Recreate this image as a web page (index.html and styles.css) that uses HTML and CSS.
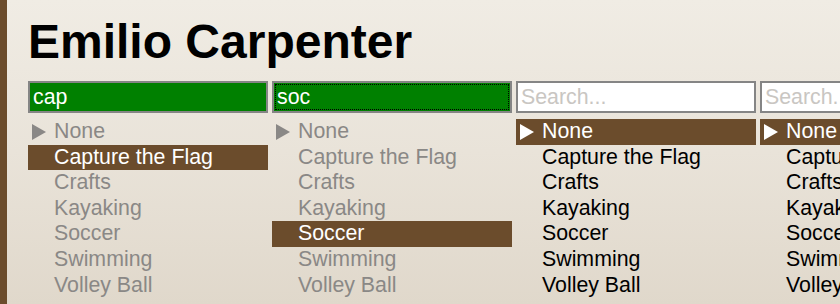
FILE: index.html
```html
<!DOCTYPE html>
<html>
<head>
<meta charset="utf-8">
<link rel="stylesheet" href="styles.css">
</head>
<body>
<div class="page">
  <h1 class="name">Emilio Carpenter</h1>
  <div class="columns">
    <div class="col">
      <input class="search filled" type="text" value="cap">
      <ul class="list">
        <li class="item dim"><span class="tri"></span>None</li>
        <li class="item sel">Capture the Flag</li>
        <li class="item dim">Crafts</li>
        <li class="item dim">Kayaking</li>
        <li class="item dim">Soccer</li>
        <li class="item dim">Swimming</li>
        <li class="item dim">Volley Ball</li>
      </ul>
    </div>
    <div class="col">
      <input class="search filled focus" type="text" value="soc">
      <ul class="list">
        <li class="item dim"><span class="tri"></span>None</li>
        <li class="item dim">Capture the Flag</li>
        <li class="item dim">Crafts</li>
        <li class="item dim">Kayaking</li>
        <li class="item sel">Soccer</li>
        <li class="item dim">Swimming</li>
        <li class="item dim">Volley Ball</li>
      </ul>
    </div>
    <div class="col">
      <input class="search" type="text" placeholder="Search...">
      <ul class="list">
        <li class="item sel"><span class="tri"></span>None</li>
        <li class="item">Capture the Flag</li>
        <li class="item">Crafts</li>
        <li class="item">Kayaking</li>
        <li class="item">Soccer</li>
        <li class="item">Swimming</li>
        <li class="item">Volley Ball</li>
      </ul>
    </div>
    <div class="col">
      <input class="search" type="text" placeholder="Search...">
      <ul class="list">
        <li class="item sel"><span class="tri"></span>None</li>
        <li class="item">Capture the Flag</li>
        <li class="item">Crafts</li>
        <li class="item">Kayaking</li>
        <li class="item">Soccer</li>
        <li class="item">Swimming</li>
        <li class="item">Volley Ball</li>
      </ul>
    </div>
  </div>
</div>
</body>
</html>
```
FILE: styles.css
```css
html, body {
  margin: 0;
  padding: 0;
  height: 100%;
  overflow: hidden;
}
body {
  font-family: "Liberation Sans", Arial, sans-serif;
  background: linear-gradient(to bottom, #f0ece4 0%, #e9e3d9 50%, #e0d8cb 100%);
  border-left: 7px solid #6b4c2c;
  box-sizing: border-box;
}
.page {
  padding: 13.5px 0 0 21px;
}
.name {
  margin: 0 0 12.5px 0;
  font-size: 48px;
  font-weight: bold;
  line-height: 55px;
  color: #000;
  white-space: nowrap;
}
.columns {
  display: flex;
  gap: 4px;
}
.col {
  flex: 0 0 240px;
  width: 240px;
}
.search {
  display: block;
  box-sizing: border-box;
  width: 240px;
  height: 32px;
  margin: 0;
  padding: 0 3px;
  border: 2px solid #858585;
  background: #fff;
  font-family: "Liberation Sans", Arial, sans-serif;
  font-size: 21.33px;
  color: #000;
  outline: none;
}
.search::placeholder {
  color: #c9c6c2;
}
.search.filled {
  background: #008000;
  color: #fff;
}
.search.focus {
  outline: 1px dotted #000;
  outline-offset: -4px;
}
.list {
  list-style: none;
  margin: 6px 0 0 0;
  padding: 0;
}
.item {
  display: flex;
  align-items: center;
  height: 25.6px;
  padding-left: 26px;
  font-size: 21.33px;
  line-height: 25.6px;
  color: #000;
  white-space: nowrap;
}
.item.dim {
  color: #8a8886;
}
.item.sel {
  background: #6b4c2c;
  color: #fff;
}
.tri {
  width: 0;
  height: 0;
  margin-left: -22px;
  margin-right: 8px;
  border-left: 14px solid currentColor;
  border-top: 8.5px solid transparent;
  border-bottom: 8.5px solid transparent;
}
```
